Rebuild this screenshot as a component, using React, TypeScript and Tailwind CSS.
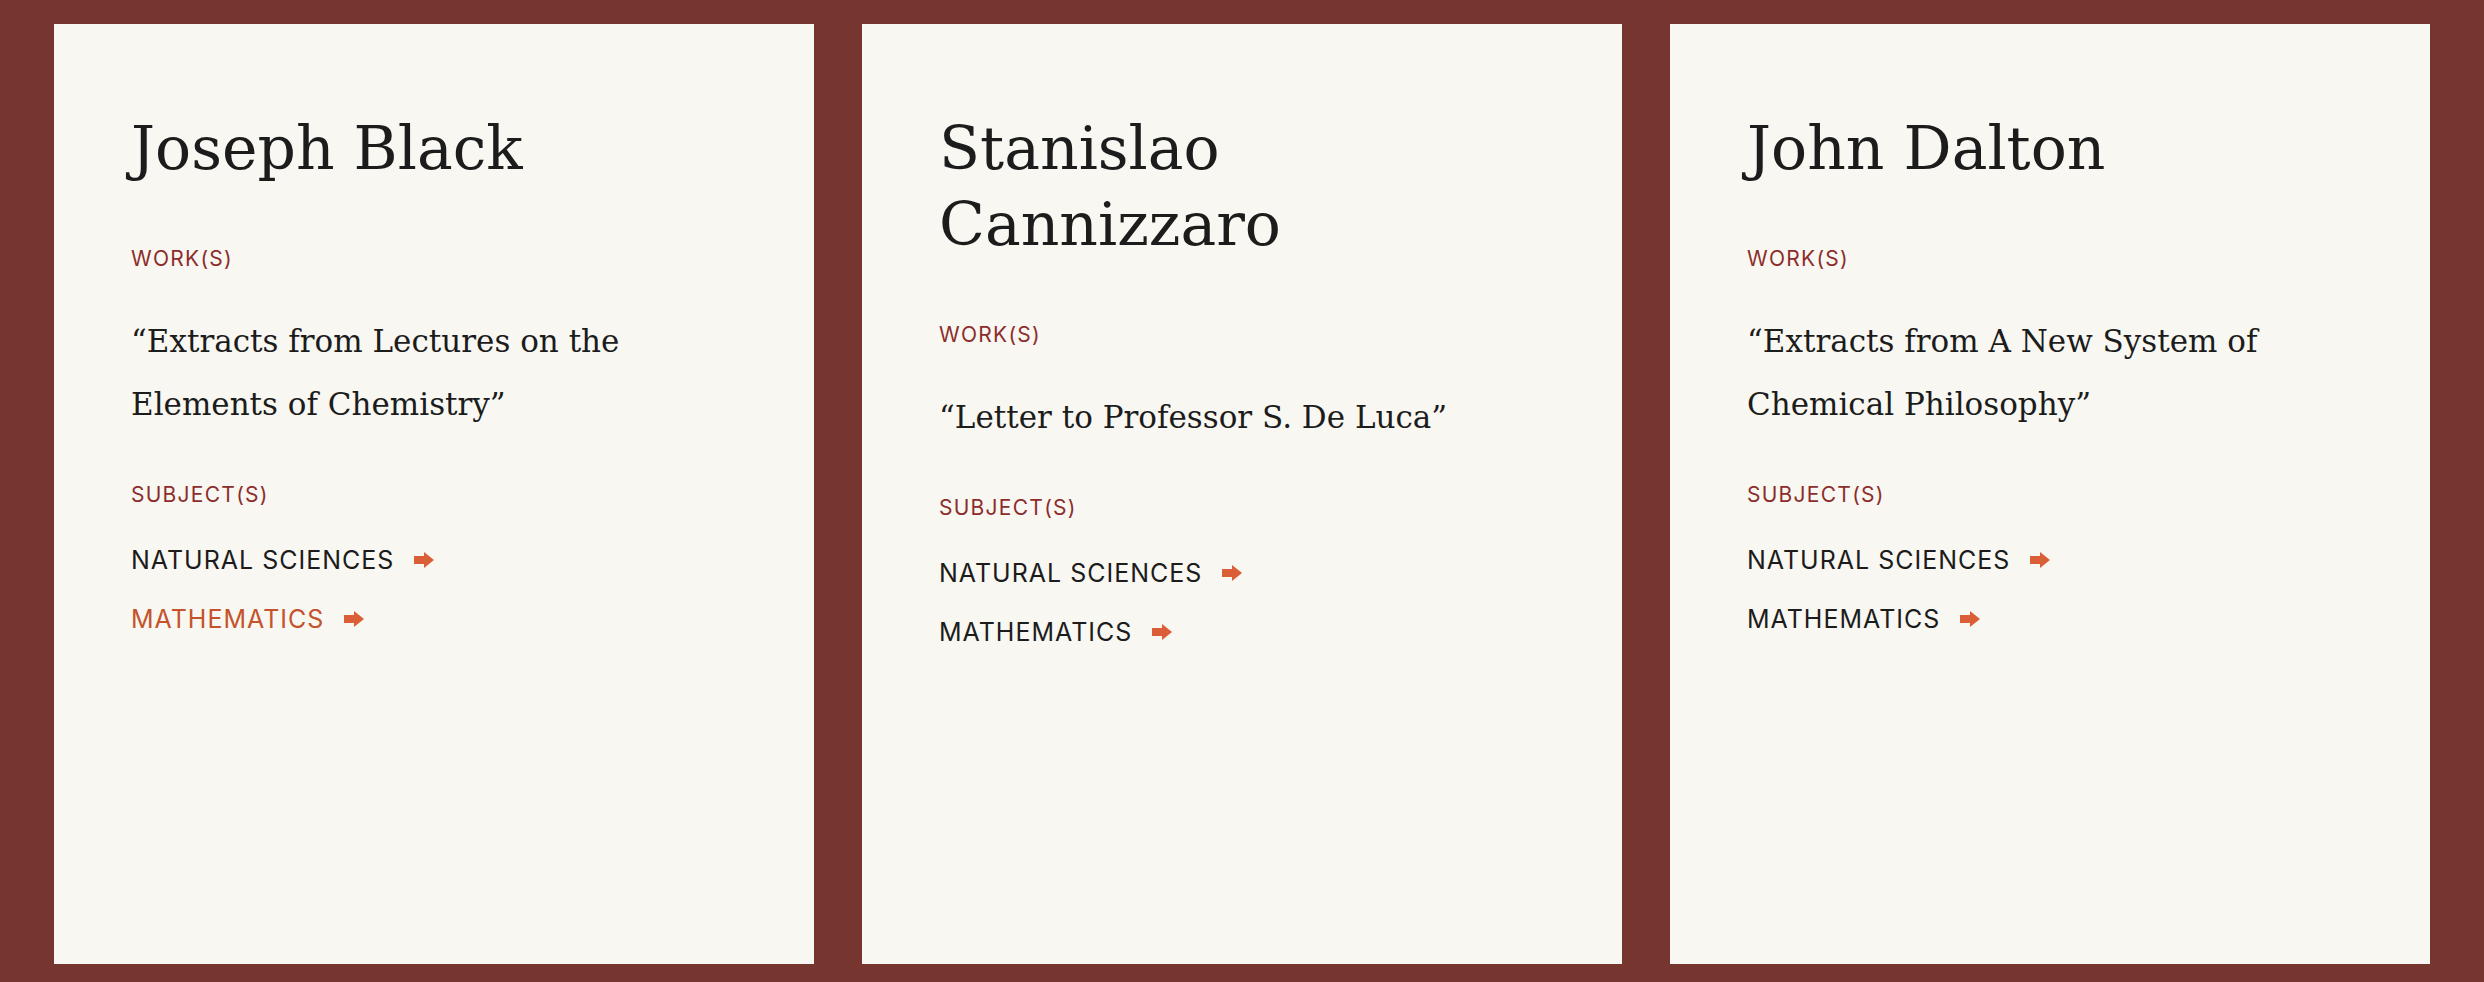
const people = [
  {
    name: 'Joseph Black',
    work: '“Extracts from Lectures on the Elements of Chemistry”',
    subjects: ['Natural Sciences', 'Mathematics'],
    active: 'Mathematics',
  },
  {
    name: 'Stanislao Cannizzaro',
    work: '“Letter to Professor S. De Luca”',
    subjects: ['Natural Sciences', 'Mathematics'],
  },
  {
    name: 'John Dalton',
    work: '“Extracts from A New System of Chemical Philosophy”',
    subjects: ['Natural Sciences', 'Mathematics'],
  },
];

function Arrow() {
  return (
    <svg width="20" height="16" viewBox="0 0 20 16" className="shrink-0">
      <path d="M0 4h10V0l10 8-10 8v-4H0z" fill="#da5f37" />
    </svg>
  );
}

function Card({ person }: { person: (typeof people)[number] }) {
  return (
    <div className="flex-1 bg-[#f8f7f2] pl-[77px] pr-[60px] pt-[86px]">
      <h2 className="font-['DejaVu_Serif',serif] text-[60px] leading-[76px] text-[#1c1c1c] max-w-[560px]">
        {person.name}
      </h2>
      <div className="mt-[57px] font-['Inter',sans-serif] text-[21px] leading-[32px] tracking-[0.06em] uppercase text-[#8c2d2b]">
        Work(s)
      </div>
      <p className="mt-[35px] font-['DejaVu_Serif',serif] text-[31px] leading-[63px] text-[#1c1c1c] max-w-[560px]">
        {person.work}
      </p>
      <div className="mt-[43px] font-['Inter',sans-serif] text-[21px] leading-[32px] tracking-[0.06em] uppercase text-[#8c2d2b]">
        Subject(s)
      </div>
      <ul className="mt-[31px] flex flex-col gap-[23px] font-['Inter',sans-serif] text-[25px] leading-[36px] tracking-[0.04em] uppercase">
        {person.subjects.map((s) => (
          <li key={s} className="flex items-center gap-[20px]">
            <span className={person.active === s ? 'text-[#c5532b]' : 'text-[#1c1c1c]'}>{s}</span>
            <Arrow />
          </li>
        ))}
      </ul>
    </div>
  );
}

export default function App() {
  return (
    <div className="flex h-[982px] gap-[48px] bg-[#76352f] px-[54px] pt-[24px] pb-[18px]">
      {people.map((p) => (
        <Card key={p.name} person={p} />
      ))}
    </div>
  );
}
